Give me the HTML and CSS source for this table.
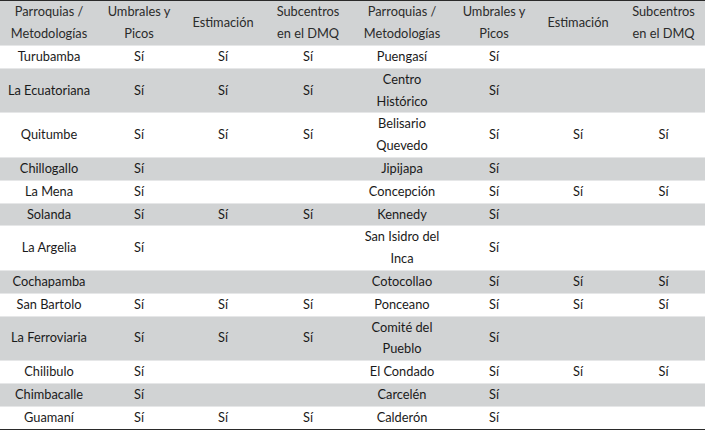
FILE: index.html
```html
<!DOCTYPE html>
<html lang="es">
<head>
<meta charset="utf-8">
<title>Tabla</title>
<link rel="stylesheet" href="styles.css">
</head>
<body>
<table class="tabla">
  <colgroup>
    <col class="c1"><col class="c2"><col class="c3"><col class="c4">
    <col class="c5"><col class="c6"><col class="c7"><col class="c8">
  </colgroup>
  <thead>
    <tr>
      <th>Parroquias / Metodologías</th><th>Umbrales y Picos</th><th>Estimación</th><th>Subcentros en el DMQ</th>
      <th>Parroquias / Metodologías</th><th>Umbrales y Picos</th><th>Estimación</th><th>Subcentros en el DMQ</th>
    </tr>
  </thead>
  <tbody>
    <tr><td>Turubamba</td><td>Sí</td><td>Sí</td><td>Sí</td><td>Puengasí</td><td>Sí</td><td></td><td></td></tr>
    <tr><td>La Ecuatoriana</td><td>Sí</td><td>Sí</td><td>Sí</td><td>Centro Histórico</td><td>Sí</td><td></td><td></td></tr>
    <tr><td>Quitumbe</td><td>Sí</td><td>Sí</td><td>Sí</td><td>Belisario Quevedo</td><td>Sí</td><td>Sí</td><td>Sí</td></tr>
    <tr><td>Chillogallo</td><td>Sí</td><td></td><td></td><td>Jipijapa</td><td>Sí</td><td></td><td></td></tr>
    <tr><td>La Mena</td><td>Sí</td><td></td><td></td><td>Concepción</td><td>Sí</td><td>Sí</td><td>Sí</td></tr>
    <tr><td>Solanda</td><td>Sí</td><td>Sí</td><td>Sí</td><td>Kennedy</td><td>Sí</td><td></td><td></td></tr>
    <tr><td>La Argelia</td><td>Sí</td><td></td><td></td><td>San Isidro del Inca</td><td>Sí</td><td></td><td></td></tr>
    <tr><td>Cochapamba</td><td></td><td></td><td></td><td>Cotocollao</td><td>Sí</td><td>Sí</td><td>Sí</td></tr>
    <tr><td>San Bartolo</td><td>Sí</td><td>Sí</td><td>Sí</td><td>Ponceano</td><td>Sí</td><td>Sí</td><td>Sí</td></tr>
    <tr><td>La Ferroviaria</td><td>Sí</td><td>Sí</td><td>Sí</td><td>Comité del Pueblo</td><td>Sí</td><td></td><td></td></tr>
    <tr><td>Chilibulo</td><td>Sí</td><td></td><td></td><td>El Condado</td><td>Sí</td><td>Sí</td><td>Sí</td></tr>
    <tr><td>Chimbacalle</td><td>Sí</td><td></td><td></td><td>Carcelén</td><td>Sí</td><td></td><td></td></tr>
    <tr><td>Guamaní</td><td>Sí</td><td>Sí</td><td>Sí</td><td>Calderón</td><td>Sí</td><td></td><td></td></tr>
  </tbody>
</table>
</body>
</html>
```
FILE: styles.css
```css
html, body {
  margin: 0;
  padding: 0;
  background: #ffffff;
}
.tabla {
  width: 705px;
  table-layout: fixed;
  border-collapse: collapse;
  font-family: Lato, "Liberation Sans", sans-serif;
  font-size: 12.8px;
  color: #1a1a1a;
  border-top: 1px solid #2a2a2a;
  border-bottom: 2px solid #2a2a2a;
}
.c1 { width: 98px; }
.c2 { width: 82px; }
.c3 { width: 86px; }
.c4 { width: 84px; }
.c5 { width: 104px; }
.c6 { width: 80px; }
.c7 { width: 88px; }
.c8 { width: 83px; }
.tabla th,
.tabla td {
  text-align: center;
  vertical-align: middle;
  line-height: 21.8px;
  padding: 0 8px;
  font-weight: normal;
}
.tabla td:first-child {
  padding: 0 2px;
}
.tabla thead tr {
  background: #d1d3d4;
}
.tabla th {
  color: #2b2b2b;
  height: 44px;
  padding: 0 6px;
}
.tabla td {
  border-top: 1px solid #e6e7e8;
}
.tabla tbody tr:nth-child(even) {
  background: #d1d3d4;
}
```
